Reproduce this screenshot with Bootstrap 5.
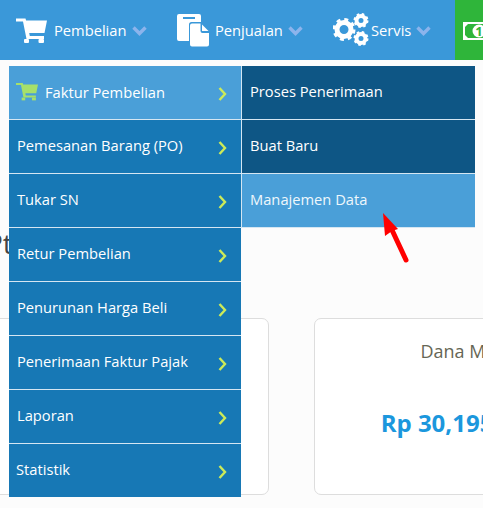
<!DOCTYPE html>
<html lang="id">
<head>
<meta charset="utf-8">
<title>Pembelian</title>
<link href="https://cdn.jsdelivr.net/npm/bootstrap@5.3.0/dist/css/bootstrap.min.css" rel="stylesheet">
<style>
html,body{height:508px;overflow:hidden}
body{background:#fcfcfc;font-family:"Open Sans","Noto Sans",sans-serif;position:relative;width:483px}
.topbar{height:60px;background:#3a98d9;overflow:hidden;flex-wrap:nowrap}
.topitem{color:#fff;font-size:14.7px;white-space:nowrap}
.topitem svg.chev{margin-left:5px;margin-top:1px}
.t1{width:177px;padding-left:16px}
.t1 .lbl{margin-left:7px}
.t2{width:156px}
.t2 .lbl{margin-left:6px}
.t3{width:122px}
.t3 .lbl{margin-left:2px}
.greenbox{width:28px;height:60px;background:#2fb53a;flex:none;padding:22px 0 0 8px;overflow:hidden}
.notetext{font:700 13px "Open Sans",sans-serif;fill:#2fb53a}
.pagehead{font-size:28px;color:#444;margin:164px 0 0 -14px;line-height:38px;height:38px}
.cardrow{margin:56px 0 0 -31px;gap:45px;width:700px}
.statcard{width:300px;height:177px;border:1px solid #ddd;border-radius:7px;background:#fff;flex:none;text-align:center}
.statname{font-size:18px;color:#665;padding:19px 0 0 17px;white-space:nowrap}
.statval{font-size:24px;font-weight:700;color:#1b97dd;padding:40px 6px 0 0;white-space:nowrap}
.menuwrap{position:absolute;left:9px;top:66px;display:flex;align-items:flex-start}
.mainmenu,.submenu{list-style:none;margin:0;padding:0;width:232px}
.submenu{width:234px}
.menurow{height:54px;background:#1778b5;color:#fff;font-size:14.7px;display:flex;align-items:center;justify-content:space-between;padding:0 14px 3px 8px;border-bottom:1px solid #d5e6f2;white-space:nowrap}
.mainmenu .menurow:last-child{border-bottom:0;height:53px;padding-left:7px}
.menurow svg.next{margin-top:5px}
.menurow.lit{background:#4a9fd8;padding-bottom:1px}
.menurow.lit svg.next{margin-top:3px}
.submenu .menurow{background:#0e5685;padding:0 8px 3px 8px;border-left:1px solid #d5e6f2}
.submenu .menurow.lit{background:#4a9fd8;color:#eef7fc;padding-bottom:3px}
.carticon{margin:0 7px 0 -1px}
.redarrow{position:absolute;left:380px;top:210px}
</style>
</head>
<body>
<nav class="topbar d-flex align-items-center">
  <a class="topitem t1 d-flex align-items-center text-decoration-none" href="#">
    <svg width="31" height="25" viewBox="0 0 31 25"><path fill="#fff" d="M0 .5h9.500l.6 2H31L28.500 15H13.200l.6 3H28v3H10.500L7 3.500H0z"/><rect x="8" y="21" width="5" height="4" rx="1" fill="#fff"/><rect x="22.500" y="21" width="5.500" height="4" rx="1" fill="#fff"/></svg>
    <span class="lbl">Pembelian</span>
    <svg class="chev" width="15" height="10" viewBox="0 0 15 10"><path fill="none" stroke="#8cb4ec" stroke-width="3.400" d="M1.500 1.500 7.500 7.500 13.500 1.500"/></svg>
  </a>
  <a class="topitem t2 d-flex align-items-center text-decoration-none" href="#">
    <svg width="32" height="34" viewBox="0 0 32 34"><path fill="#fff" d="M2 1h20a2 2 0 0 1 2 2v6H14.500a2.500 2.500 0 0 0-2.500 2.500V28H2a2 2 0 0 1-2-2V3a2 2 0 0 1 2-2z"/><rect x="6" y="4" width="12" height="2" fill="#3a98d9"/><path fill="#fff" d="M15 10.500h8.500V18a2 2 0 0 0 2 2H32v11.500a2 2 0 0 1-2 2H15a2 2 0 0 1-2-2v-19a2 2 0 0 1 2-2z"/><path fill="#fff" d="M25 11.500l6.500 6.500H25z"/></svg>
    <span class="lbl">Penjualan</span>
    <svg class="chev" width="15" height="10" viewBox="0 0 15 10"><path fill="none" stroke="#8cb4ec" stroke-width="3.400" d="M1.500 1.500 7.500 7.500 13.500 1.500"/></svg>
  </a>
  <a class="topitem t3 d-flex align-items-center text-decoration-none" href="#">
    <svg width="36" height="34" viewBox="0 0 36 34">
      <circle cx="11" cy="16.500" r="7" fill="none" stroke="#fff" stroke-width="5"/>
      <circle cx="11" cy="16.500" r="10" fill="none" stroke="#fff" stroke-width="3" stroke-dasharray="3.930 3.920"/>
      <circle cx="28" cy="7.500" r="4.500" fill="none" stroke="#fff" stroke-width="4"/>
      <circle cx="28" cy="7.500" r="6.500" fill="none" stroke="#fff" stroke-width="2" stroke-dasharray="2.550 2.550"/>
      <circle cx="28" cy="25.500" r="4.500" fill="none" stroke="#fff" stroke-width="4"/>
      <circle cx="28" cy="25.500" r="6.500" fill="none" stroke="#fff" stroke-width="2" stroke-dasharray="2.550 2.550"/>
    </svg>
    <span class="lbl">Servis</span>
    <svg class="chev" width="15" height="10" viewBox="0 0 15 10"><path fill="none" stroke="#8cb4ec" stroke-width="3.400" d="M1.500 1.500 7.500 7.500 13.500 1.500"/></svg>
  </a>
  <div class="greenbox">
    <svg class="d-block" width="36" height="18" viewBox="0 0 36 18"><rect width="36" height="18" fill="#fff"/><path fill="#2fb53a" d="M5 2h26l3 3v8l-3 3H5l-3-3V5z"/><circle cx="16" cy="9" r="6.500" fill="#fff"/><text class="notetext" x="16" y="13.500" text-anchor="middle">1</text></svg>
  </div>
</nav>
<main>
  <div class="pagehead">Pt</div>
  <div class="cardrow d-flex">
    <div class="statcard"></div>
    <div class="statcard">
      <div class="statname">Dana Masuk</div>
      <div class="statval">Rp 30,195,000</div>
    </div>
  </div>
</main>
<div class="menuwrap">
  <ul class="mainmenu">
    <li class="menurow lit"><span class="d-flex align-items-center"><svg class="carticon" width="22" height="19" viewBox="0 0 31 25"><path fill="#a6e06a" d="M0 .5h9.500l.6 2H31L28.500 15H13.200l.6 3H28v3H10.500L7 3.500H0z"/><rect x="8" y="21" width="5" height="4" fill="#a6e06a"/><rect x="22.500" y="21" width="5.500" height="4" fill="#a6e06a"/></svg>Faktur Pembelian</span><svg class="next" width="9" height="14" viewBox="0 0 9 14"><path fill="none" stroke="#cdea58" stroke-width="2.400" d="M1.500 1 7 7 1.500 13"/></svg></li>
    <li class="menurow"><span>Pemesanan Barang (PO)</span><svg class="next" width="9" height="14" viewBox="0 0 9 14"><path fill="none" stroke="#cdea58" stroke-width="2.400" d="M1.500 1 7 7 1.500 13"/></svg></li>
    <li class="menurow"><span>Tukar SN</span><svg class="next" width="9" height="14" viewBox="0 0 9 14"><path fill="none" stroke="#cdea58" stroke-width="2.400" d="M1.500 1 7 7 1.500 13"/></svg></li>
    <li class="menurow"><span>Retur Pembelian</span><svg class="next" width="9" height="14" viewBox="0 0 9 14"><path fill="none" stroke="#cdea58" stroke-width="2.400" d="M1.500 1 7 7 1.500 13"/></svg></li>
    <li class="menurow"><span>Penurunan Harga Beli</span><svg class="next" width="9" height="14" viewBox="0 0 9 14"><path fill="none" stroke="#cdea58" stroke-width="2.400" d="M1.500 1 7 7 1.500 13"/></svg></li>
    <li class="menurow"><span>Penerimaan Faktur Pajak</span><svg class="next" width="9" height="14" viewBox="0 0 9 14"><path fill="none" stroke="#cdea58" stroke-width="2.400" d="M1.500 1 7 7 1.500 13"/></svg></li>
    <li class="menurow"><span>Laporan</span><svg class="next" width="9" height="14" viewBox="0 0 9 14"><path fill="none" stroke="#cdea58" stroke-width="2.400" d="M1.500 1 7 7 1.500 13"/></svg></li>
    <li class="menurow"><span>Statistik</span><svg class="next" width="9" height="14" viewBox="0 0 9 14"><path fill="none" stroke="#cdea58" stroke-width="2.400" d="M1.500 1 7 7 1.500 13"/></svg></li>
  </ul>
  <ul class="submenu">
    <li class="menurow"><span>Proses Penerimaan</span></li>
    <li class="menurow"><span>Buat Baru</span></li>
    <li class="menurow lit"><span>Manajemen Data</span></li>
  </ul>
</div>
<svg class="redarrow" width="32" height="56" viewBox="0 0 32 56"><path fill="none" stroke="#f00" stroke-width="5" stroke-linecap="round" d="M26 50 12 20"/><path fill="#f00" d="M3 3 18 19 12 21 5 26z"/></svg>
<script src="https://cdn.jsdelivr.net/npm/bootstrap@5.3.0/dist/js/bootstrap.bundle.min.js"></script>
</body>
</html>
